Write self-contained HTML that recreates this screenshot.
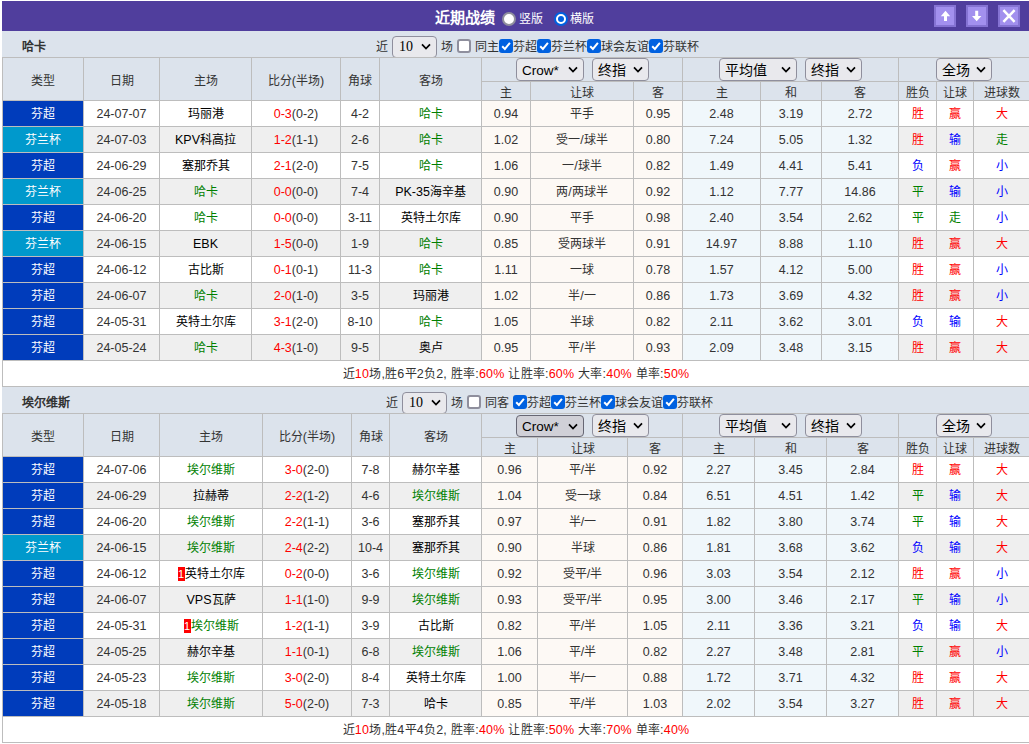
<!DOCTYPE html>
<html lang="zh-CN"><head><meta charset="utf-8"><title>近期战绩</title>
<style>
html,body{margin:0;padding:0;background:#fff;width:1029px;height:744px;overflow:hidden;position:relative}
body{font-family:"Liberation Sans",sans-serif;font-size:12px;color:#333}
.c,.t,.sel,.cb,.rad,.btn{position:absolute;box-sizing:border-box}
.c{overflow:hidden;text-align:center;line-height:25px;white-space:nowrap}
.d{padding-top:1px}
.sm{letter-spacing:0.22px}
.h{padding-top:2px}
.t{white-space:nowrap;height:26px;line-height:26px;padding-top:3px}
.n{font-size:12.5px}
.tm{color:#000}
.tg{color:#008000}
.r{color:#f00}
.rc{background:#f00;color:#fff;font-size:11px;display:inline-block;line-height:14px;width:7px;text-align:center;vertical-align:0px}
.top{position:absolute;left:2px;top:1px;width:1027px;height:30px;background:#503e9d}
.title{position:absolute;left:435px;top:3px;height:30px;line-height:30px;color:#fff;font-size:15px;font-weight:bold;white-space:nowrap}
.rt{position:absolute;top:4px;height:30px;line-height:30px;color:#fff;font-size:12px;white-space:nowrap}
.btn{top:5px;width:22px;height:22px;background:#a290ee;border:2px solid #8573d3}
.btn svg{position:absolute;left:-2px;top:-2px}
.bname{font-weight:bold;color:#333}
.bt{color:#333}
.sel{border:1px solid #8f8f9d;border-radius:4px;background:#e9e9ed;color:#000;font-size:14px;line-height:20px;white-space:nowrap;padding-left:5px;padding-top:1px}
.sel.dark{background:#d0d0d7;border-color:#676774;padding-top:0}
.sel .chev{position:absolute;right:5px;top:7px}
.sel .mono{font-family:"Liberation Serif",serif;font-size:14px;position:relative;top:-2px;left:1px}
.sel.s10 .chev{top:6px}
.sel .lat{font-size:13.5px}
.cb{width:14px;height:14px;border:2px solid #8f8f9d;border-radius:3px;background:#fff}
.cb.on{border:none;background:#0061e0}
.cb svg{position:absolute;left:0;top:0}
.rad{width:14px;height:14px;border-radius:50%;border:2px solid #8f8f9d;background:#fff}
.rad.on{border:2px solid #0061e0}
.rad.on i{position:absolute;left:2px;top:2px;width:6px;height:6px;border-radius:50%;background:#0061e0}
</style></head><body>
<div class="top"></div>
<div class="title">近期战绩</div>
<div class="rad" style="left:502px;top:12px"></div><div class="rt" style="left:519px">竖版</div>
<div class="rad on" style="left:554px;top:12px"><i></i></div><div class="rt" style="left:570px">横版</div>
<div class="btn" style="left:934px"><svg width="22" height="22" viewBox="0 0 22 22"><path d="M11.5 5.8 L16.2 11.2 L13 11.2 L13 16 L10 16 L10 11.2 L6.8 11.2 Z" fill="#fff"/></svg></div>
<div class="btn" style="left:966px"><svg width="22" height="22" viewBox="0 0 22 22"><path d="M9.2 5.8 L12.2 5.8 L12.2 10.9 L15.4 10.9 L10.7 16.3 L6 10.9 L9.2 10.9 Z" fill="#fff"/></svg></div>
<div class="btn" style="left:998px"><svg width="22" height="22" viewBox="0 0 22 22"><path d="M5.4 5.2 L16.6 16.8 M16.6 5.2 L5.4 16.8" stroke="#fff" stroke-width="2.5"/></svg></div>
<div class="c" style="left:2px;top:31px;width:1027px;height:26px;background:#dce3ec"></div><div class="t bname" style="left:22px;top:31px;">哈卡</div><div class="t bt" style="left:376px;top:31px;">近</div><div class="sel s10" style="left:392px;top:36px;width:45px;height:22px"><span class="mono">10</span><svg class="chev" width="10" height="7" viewBox="0 0 10 7"><path d="M1 1.3 L5 5.5 L9 1.3" fill="none" stroke="#000" stroke-width="1.7"/></svg></div><div class="t bt" style="left:441px;top:31px;">场</div><div class="cb" style="left:457px;top:39px"></div><div class="t bt" style="left:475px;top:31px;">同主</div><div class="cb on" style="left:499px;top:39px"><svg width="14" height="14" viewBox="0 0 14 14"><path d="M3.2 7.2 L5.9 9.9 L10.9 3.9" fill="none" stroke="#fff" stroke-width="2"/></svg></div><div class="t bt" style="left:513px;top:31px;">芬超</div><div class="cb on" style="left:537px;top:39px"><svg width="14" height="14" viewBox="0 0 14 14"><path d="M3.2 7.2 L5.9 9.9 L10.9 3.9" fill="none" stroke="#fff" stroke-width="2"/></svg></div><div class="t bt" style="left:551px;top:31px;">芬兰杯</div><div class="cb on" style="left:587px;top:39px"><svg width="14" height="14" viewBox="0 0 14 14"><path d="M3.2 7.2 L5.9 9.9 L10.9 3.9" fill="none" stroke="#fff" stroke-width="2"/></svg></div><div class="t bt" style="left:601px;top:31px;">球会友谊</div><div class="cb on" style="left:649px;top:39px"><svg width="14" height="14" viewBox="0 0 14 14"><path d="M3.2 7.2 L5.9 9.9 L10.9 3.9" fill="none" stroke="#fff" stroke-width="2"/></svg></div><div class="t bt" style="left:663px;top:31px;">芬联杯</div><div class="c" style="left:2px;top:57px;width:1040px;height:330px;background:#bdbdbd"></div><div class="c h" style="left:3px;top:58px;width:80px;height:42px;background:#dce3ec;line-height:42px">类型</div><div class="c h" style="left:84px;top:58px;width:75px;height:42px;background:#dce3ec;line-height:42px">日期</div><div class="c h" style="left:160px;top:58px;width:91px;height:42px;background:#dce3ec;line-height:42px">主场</div><div class="c h" style="left:252px;top:58px;width:88px;height:42px;background:#dce3ec;line-height:42px">比分<span class="n">(</span>半场<span class="n">)</span></div><div class="c h" style="left:341px;top:58px;width:38px;height:42px;background:#dce3ec;line-height:42px">角球</div><div class="c h" style="left:380px;top:58px;width:101px;height:42px;background:#dce3ec;line-height:42px">客场</div><div class="c h" style="left:482px;top:58px;width:200px;height:23px;background:#dce3ec"></div><div class="c h" style="left:683px;top:58px;width:215px;height:23px;background:#dce3ec"></div><div class="c h" style="left:899px;top:58px;width:130px;height:23px;background:#dce3ec"></div><div class="sel" style="left:516px;top:58px;width:68px;height:23px"><span class="lat">Crow*</span><svg class="chev" width="10" height="7" viewBox="0 0 10 7"><path d="M1 1.3 L5 5.5 L9 1.3" fill="none" stroke="#000" stroke-width="1.7"/></svg></div><div class="sel" style="left:592px;top:58px;width:57px;height:23px"><span class="">终指</span><svg class="chev" width="10" height="7" viewBox="0 0 10 7"><path d="M1 1.3 L5 5.5 L9 1.3" fill="none" stroke="#000" stroke-width="1.7"/></svg></div><div class="sel" style="left:719px;top:58px;width:78px;height:23px"><span class="">平均值</span><svg class="chev" width="10" height="7" viewBox="0 0 10 7"><path d="M1 1.3 L5 5.5 L9 1.3" fill="none" stroke="#000" stroke-width="1.7"/></svg></div><div class="sel" style="left:805px;top:58px;width:57px;height:23px"><span class="">终指</span><svg class="chev" width="10" height="7" viewBox="0 0 10 7"><path d="M1 1.3 L5 5.5 L9 1.3" fill="none" stroke="#000" stroke-width="1.7"/></svg></div><div class="sel" style="left:936px;top:58px;width:56px;height:23px"><span class="">全场</span><svg class="chev" width="10" height="7" viewBox="0 0 10 7"><path d="M1 1.3 L5 5.5 L9 1.3" fill="none" stroke="#000" stroke-width="1.7"/></svg></div><div class="c h" style="left:482px;top:82px;width:48px;height:18px;background:#dce3ec;line-height:18px">主</div><div class="c h" style="left:531px;top:82px;width:102px;height:18px;background:#dce3ec;line-height:18px">让球</div><div class="c h" style="left:634px;top:82px;width:48px;height:18px;background:#dce3ec;line-height:18px">客</div><div class="c h" style="left:683px;top:82px;width:77px;height:18px;background:#dce3ec;line-height:18px">主</div><div class="c h" style="left:761px;top:82px;width:60px;height:18px;background:#dce3ec;line-height:18px">和</div><div class="c h" style="left:822px;top:82px;width:76px;height:18px;background:#dce3ec;line-height:18px">客</div><div class="c h" style="left:899px;top:82px;width:37px;height:18px;background:#dce3ec;line-height:18px">胜负</div><div class="c h" style="left:937px;top:82px;width:36px;height:18px;background:#dce3ec;line-height:18px">让球</div><div class="c h" style="left:974px;top:82px;width:55px;height:18px;background:#dce3ec;line-height:18px">进球数</div><div class="c d" style="left:3px;top:101px;width:80px;height:25px;background:#003cbb;color:#fff">芬超</div><div class="c d" style="left:84px;top:101px;width:75px;height:25px;background:#fff"><span class="n">24-07-07</span></div><div class="c d" style="left:160px;top:101px;width:91px;height:25px;background:#fff"><span class="tm">玛丽港</span></div><div class="c d" style="left:252px;top:101px;width:88px;height:25px;background:#fff"><span class="r"><span class="n">0-3</span></span><span class="n">(0-2)</span></div><div class="c d" style="left:341px;top:101px;width:38px;height:25px;background:#fff"><span class="n">4-2</span></div><div class="c d" style="left:380px;top:101px;width:101px;height:25px;background:#fff"><span class="tg">哈卡</span></div><div class="c d" style="left:482px;top:101px;width:48px;height:25px;background:#fdf9f5"><span class="n">0.94</span></div><div class="c d" style="left:531px;top:101px;width:102px;height:25px;background:#fdf9f5">平手</div><div class="c d" style="left:634px;top:101px;width:48px;height:25px;background:#fdf9f5"><span class="n">0.95</span></div><div class="c d" style="left:683px;top:101px;width:77px;height:25px;background:#f0f7fb"><span class="n">2.48</span></div><div class="c d" style="left:761px;top:101px;width:60px;height:25px;background:#f0f7fb"><span class="n">3.19</span></div><div class="c d" style="left:822px;top:101px;width:76px;height:25px;background:#f0f7fb"><span class="n">2.72</span></div><div class="c d" style="left:899px;top:101px;width:37px;height:25px;background:#fff;color:#f00">胜</div><div class="c d" style="left:937px;top:101px;width:36px;height:25px;background:#fff;color:#f00">赢</div><div class="c d" style="left:974px;top:101px;width:55px;height:25px;background:#fff;color:#f00">大</div><div class="c d" style="left:3px;top:127px;width:80px;height:25px;background:#0099cc;color:#fff">芬兰杯</div><div class="c d" style="left:84px;top:127px;width:75px;height:25px;background:#efefef"><span class="n">24-07-03</span></div><div class="c d" style="left:160px;top:127px;width:91px;height:25px;background:#efefef"><span class="tm"><span class="n">KPV</span>科高拉</span></div><div class="c d" style="left:252px;top:127px;width:88px;height:25px;background:#efefef"><span class="r"><span class="n">1-2</span></span><span class="n">(1-1)</span></div><div class="c d" style="left:341px;top:127px;width:38px;height:25px;background:#efefef"><span class="n">2-6</span></div><div class="c d" style="left:380px;top:127px;width:101px;height:25px;background:#efefef"><span class="tg">哈卡</span></div><div class="c d" style="left:482px;top:127px;width:48px;height:25px;background:#fdf9f5"><span class="n">1.02</span></div><div class="c d" style="left:531px;top:127px;width:102px;height:25px;background:#fdf9f5">受一<span class="n">/</span>球半</div><div class="c d" style="left:634px;top:127px;width:48px;height:25px;background:#fdf9f5"><span class="n">0.80</span></div><div class="c d" style="left:683px;top:127px;width:77px;height:25px;background:#f0f7fb"><span class="n">7.24</span></div><div class="c d" style="left:761px;top:127px;width:60px;height:25px;background:#f0f7fb"><span class="n">5.05</span></div><div class="c d" style="left:822px;top:127px;width:76px;height:25px;background:#f0f7fb"><span class="n">1.32</span></div><div class="c d" style="left:899px;top:127px;width:37px;height:25px;background:#efefef;color:#f00">胜</div><div class="c d" style="left:937px;top:127px;width:36px;height:25px;background:#efefef;color:#00f">输</div><div class="c d" style="left:974px;top:127px;width:55px;height:25px;background:#efefef;color:#008000">走</div><div class="c d" style="left:3px;top:153px;width:80px;height:25px;background:#003cbb;color:#fff">芬超</div><div class="c d" style="left:84px;top:153px;width:75px;height:25px;background:#fff"><span class="n">24-06-29</span></div><div class="c d" style="left:160px;top:153px;width:91px;height:25px;background:#fff"><span class="tm">塞那乔其</span></div><div class="c d" style="left:252px;top:153px;width:88px;height:25px;background:#fff"><span class="r"><span class="n">2-1</span></span><span class="n">(2-0)</span></div><div class="c d" style="left:341px;top:153px;width:38px;height:25px;background:#fff"><span class="n">7-5</span></div><div class="c d" style="left:380px;top:153px;width:101px;height:25px;background:#fff"><span class="tg">哈卡</span></div><div class="c d" style="left:482px;top:153px;width:48px;height:25px;background:#fdf9f5"><span class="n">1.06</span></div><div class="c d" style="left:531px;top:153px;width:102px;height:25px;background:#fdf9f5">一<span class="n">/</span>球半</div><div class="c d" style="left:634px;top:153px;width:48px;height:25px;background:#fdf9f5"><span class="n">0.82</span></div><div class="c d" style="left:683px;top:153px;width:77px;height:25px;background:#f0f7fb"><span class="n">1.49</span></div><div class="c d" style="left:761px;top:153px;width:60px;height:25px;background:#f0f7fb"><span class="n">4.41</span></div><div class="c d" style="left:822px;top:153px;width:76px;height:25px;background:#f0f7fb"><span class="n">5.41</span></div><div class="c d" style="left:899px;top:153px;width:37px;height:25px;background:#fff;color:#00f">负</div><div class="c d" style="left:937px;top:153px;width:36px;height:25px;background:#fff;color:#f00">赢</div><div class="c d" style="left:974px;top:153px;width:55px;height:25px;background:#fff;color:#00f">小</div><div class="c d" style="left:3px;top:179px;width:80px;height:25px;background:#0099cc;color:#fff">芬兰杯</div><div class="c d" style="left:84px;top:179px;width:75px;height:25px;background:#efefef"><span class="n">24-06-25</span></div><div class="c d" style="left:160px;top:179px;width:91px;height:25px;background:#efefef"><span class="tg">哈卡</span></div><div class="c d" style="left:252px;top:179px;width:88px;height:25px;background:#efefef"><span class="r"><span class="n">0-0</span></span><span class="n">(0-0)</span></div><div class="c d" style="left:341px;top:179px;width:38px;height:25px;background:#efefef"><span class="n">7-4</span></div><div class="c d" style="left:380px;top:179px;width:101px;height:25px;background:#efefef"><span class="tm"><span class="n">PK-35</span>海辛基</span></div><div class="c d" style="left:482px;top:179px;width:48px;height:25px;background:#fdf9f5"><span class="n">0.90</span></div><div class="c d" style="left:531px;top:179px;width:102px;height:25px;background:#fdf9f5">两<span class="n">/</span>两球半</div><div class="c d" style="left:634px;top:179px;width:48px;height:25px;background:#fdf9f5"><span class="n">0.92</span></div><div class="c d" style="left:683px;top:179px;width:77px;height:25px;background:#f0f7fb"><span class="n">1.12</span></div><div class="c d" style="left:761px;top:179px;width:60px;height:25px;background:#f0f7fb"><span class="n">7.77</span></div><div class="c d" style="left:822px;top:179px;width:76px;height:25px;background:#f0f7fb"><span class="n">14.86</span></div><div class="c d" style="left:899px;top:179px;width:37px;height:25px;background:#efefef;color:#008000">平</div><div class="c d" style="left:937px;top:179px;width:36px;height:25px;background:#efefef;color:#00f">输</div><div class="c d" style="left:974px;top:179px;width:55px;height:25px;background:#efefef;color:#00f">小</div><div class="c d" style="left:3px;top:205px;width:80px;height:25px;background:#003cbb;color:#fff">芬超</div><div class="c d" style="left:84px;top:205px;width:75px;height:25px;background:#fff"><span class="n">24-06-20</span></div><div class="c d" style="left:160px;top:205px;width:91px;height:25px;background:#fff"><span class="tg">哈卡</span></div><div class="c d" style="left:252px;top:205px;width:88px;height:25px;background:#fff"><span class="r"><span class="n">0-0</span></span><span class="n">(0-0)</span></div><div class="c d" style="left:341px;top:205px;width:38px;height:25px;background:#fff"><span class="n">3-11</span></div><div class="c d" style="left:380px;top:205px;width:101px;height:25px;background:#fff"><span class="tm">英特土尔库</span></div><div class="c d" style="left:482px;top:205px;width:48px;height:25px;background:#fdf9f5"><span class="n">0.90</span></div><div class="c d" style="left:531px;top:205px;width:102px;height:25px;background:#fdf9f5">平手</div><div class="c d" style="left:634px;top:205px;width:48px;height:25px;background:#fdf9f5"><span class="n">0.98</span></div><div class="c d" style="left:683px;top:205px;width:77px;height:25px;background:#f0f7fb"><span class="n">2.40</span></div><div class="c d" style="left:761px;top:205px;width:60px;height:25px;background:#f0f7fb"><span class="n">3.54</span></div><div class="c d" style="left:822px;top:205px;width:76px;height:25px;background:#f0f7fb"><span class="n">2.62</span></div><div class="c d" style="left:899px;top:205px;width:37px;height:25px;background:#fff;color:#008000">平</div><div class="c d" style="left:937px;top:205px;width:36px;height:25px;background:#fff;color:#008000">走</div><div class="c d" style="left:974px;top:205px;width:55px;height:25px;background:#fff;color:#00f">小</div><div class="c d" style="left:3px;top:231px;width:80px;height:25px;background:#0099cc;color:#fff">芬兰杯</div><div class="c d" style="left:84px;top:231px;width:75px;height:25px;background:#efefef"><span class="n">24-06-15</span></div><div class="c d" style="left:160px;top:231px;width:91px;height:25px;background:#efefef"><span class="tm"><span class="n">EBK</span></span></div><div class="c d" style="left:252px;top:231px;width:88px;height:25px;background:#efefef"><span class="r"><span class="n">1-5</span></span><span class="n">(0-0)</span></div><div class="c d" style="left:341px;top:231px;width:38px;height:25px;background:#efefef"><span class="n">1-9</span></div><div class="c d" style="left:380px;top:231px;width:101px;height:25px;background:#efefef"><span class="tg">哈卡</span></div><div class="c d" style="left:482px;top:231px;width:48px;height:25px;background:#fdf9f5"><span class="n">0.85</span></div><div class="c d" style="left:531px;top:231px;width:102px;height:25px;background:#fdf9f5">受两球半</div><div class="c d" style="left:634px;top:231px;width:48px;height:25px;background:#fdf9f5"><span class="n">0.91</span></div><div class="c d" style="left:683px;top:231px;width:77px;height:25px;background:#f0f7fb"><span class="n">14.97</span></div><div class="c d" style="left:761px;top:231px;width:60px;height:25px;background:#f0f7fb"><span class="n">8.88</span></div><div class="c d" style="left:822px;top:231px;width:76px;height:25px;background:#f0f7fb"><span class="n">1.10</span></div><div class="c d" style="left:899px;top:231px;width:37px;height:25px;background:#efefef;color:#f00">胜</div><div class="c d" style="left:937px;top:231px;width:36px;height:25px;background:#efefef;color:#f00">赢</div><div class="c d" style="left:974px;top:231px;width:55px;height:25px;background:#efefef;color:#f00">大</div><div class="c d" style="left:3px;top:257px;width:80px;height:25px;background:#003cbb;color:#fff">芬超</div><div class="c d" style="left:84px;top:257px;width:75px;height:25px;background:#fff"><span class="n">24-06-12</span></div><div class="c d" style="left:160px;top:257px;width:91px;height:25px;background:#fff"><span class="tm">古比斯</span></div><div class="c d" style="left:252px;top:257px;width:88px;height:25px;background:#fff"><span class="r"><span class="n">0-1</span></span><span class="n">(0-1)</span></div><div class="c d" style="left:341px;top:257px;width:38px;height:25px;background:#fff"><span class="n">11-3</span></div><div class="c d" style="left:380px;top:257px;width:101px;height:25px;background:#fff"><span class="tg">哈卡</span></div><div class="c d" style="left:482px;top:257px;width:48px;height:25px;background:#fdf9f5"><span class="n">1.11</span></div><div class="c d" style="left:531px;top:257px;width:102px;height:25px;background:#fdf9f5">一球</div><div class="c d" style="left:634px;top:257px;width:48px;height:25px;background:#fdf9f5"><span class="n">0.78</span></div><div class="c d" style="left:683px;top:257px;width:77px;height:25px;background:#f0f7fb"><span class="n">1.57</span></div><div class="c d" style="left:761px;top:257px;width:60px;height:25px;background:#f0f7fb"><span class="n">4.12</span></div><div class="c d" style="left:822px;top:257px;width:76px;height:25px;background:#f0f7fb"><span class="n">5.00</span></div><div class="c d" style="left:899px;top:257px;width:37px;height:25px;background:#fff;color:#f00">胜</div><div class="c d" style="left:937px;top:257px;width:36px;height:25px;background:#fff;color:#f00">赢</div><div class="c d" style="left:974px;top:257px;width:55px;height:25px;background:#fff;color:#00f">小</div><div class="c d" style="left:3px;top:283px;width:80px;height:25px;background:#003cbb;color:#fff">芬超</div><div class="c d" style="left:84px;top:283px;width:75px;height:25px;background:#efefef"><span class="n">24-06-07</span></div><div class="c d" style="left:160px;top:283px;width:91px;height:25px;background:#efefef"><span class="tg">哈卡</span></div><div class="c d" style="left:252px;top:283px;width:88px;height:25px;background:#efefef"><span class="r"><span class="n">2-0</span></span><span class="n">(1-0)</span></div><div class="c d" style="left:341px;top:283px;width:38px;height:25px;background:#efefef"><span class="n">3-5</span></div><div class="c d" style="left:380px;top:283px;width:101px;height:25px;background:#efefef"><span class="tm">玛丽港</span></div><div class="c d" style="left:482px;top:283px;width:48px;height:25px;background:#fdf9f5"><span class="n">1.02</span></div><div class="c d" style="left:531px;top:283px;width:102px;height:25px;background:#fdf9f5">半<span class="n">/</span>一</div><div class="c d" style="left:634px;top:283px;width:48px;height:25px;background:#fdf9f5"><span class="n">0.86</span></div><div class="c d" style="left:683px;top:283px;width:77px;height:25px;background:#f0f7fb"><span class="n">1.73</span></div><div class="c d" style="left:761px;top:283px;width:60px;height:25px;background:#f0f7fb"><span class="n">3.69</span></div><div class="c d" style="left:822px;top:283px;width:76px;height:25px;background:#f0f7fb"><span class="n">4.32</span></div><div class="c d" style="left:899px;top:283px;width:37px;height:25px;background:#efefef;color:#f00">胜</div><div class="c d" style="left:937px;top:283px;width:36px;height:25px;background:#efefef;color:#f00">赢</div><div class="c d" style="left:974px;top:283px;width:55px;height:25px;background:#efefef;color:#00f">小</div><div class="c d" style="left:3px;top:309px;width:80px;height:25px;background:#003cbb;color:#fff">芬超</div><div class="c d" style="left:84px;top:309px;width:75px;height:25px;background:#fff"><span class="n">24-05-31</span></div><div class="c d" style="left:160px;top:309px;width:91px;height:25px;background:#fff"><span class="tm">英特土尔库</span></div><div class="c d" style="left:252px;top:309px;width:88px;height:25px;background:#fff"><span class="r"><span class="n">3-1</span></span><span class="n">(2-0)</span></div><div class="c d" style="left:341px;top:309px;width:38px;height:25px;background:#fff"><span class="n">8-10</span></div><div class="c d" style="left:380px;top:309px;width:101px;height:25px;background:#fff"><span class="tg">哈卡</span></div><div class="c d" style="left:482px;top:309px;width:48px;height:25px;background:#fdf9f5"><span class="n">1.05</span></div><div class="c d" style="left:531px;top:309px;width:102px;height:25px;background:#fdf9f5">半球</div><div class="c d" style="left:634px;top:309px;width:48px;height:25px;background:#fdf9f5"><span class="n">0.82</span></div><div class="c d" style="left:683px;top:309px;width:77px;height:25px;background:#f0f7fb"><span class="n">2.11</span></div><div class="c d" style="left:761px;top:309px;width:60px;height:25px;background:#f0f7fb"><span class="n">3.62</span></div><div class="c d" style="left:822px;top:309px;width:76px;height:25px;background:#f0f7fb"><span class="n">3.01</span></div><div class="c d" style="left:899px;top:309px;width:37px;height:25px;background:#fff;color:#00f">负</div><div class="c d" style="left:937px;top:309px;width:36px;height:25px;background:#fff;color:#00f">输</div><div class="c d" style="left:974px;top:309px;width:55px;height:25px;background:#fff;color:#f00">大</div><div class="c d" style="left:3px;top:335px;width:80px;height:25px;background:#003cbb;color:#fff">芬超</div><div class="c d" style="left:84px;top:335px;width:75px;height:25px;background:#efefef"><span class="n">24-05-24</span></div><div class="c d" style="left:160px;top:335px;width:91px;height:25px;background:#efefef"><span class="tg">哈卡</span></div><div class="c d" style="left:252px;top:335px;width:88px;height:25px;background:#efefef"><span class="r"><span class="n">4-3</span></span><span class="n">(1-0)</span></div><div class="c d" style="left:341px;top:335px;width:38px;height:25px;background:#efefef"><span class="n">9-5</span></div><div class="c d" style="left:380px;top:335px;width:101px;height:25px;background:#efefef"><span class="tm">奥卢</span></div><div class="c d" style="left:482px;top:335px;width:48px;height:25px;background:#fdf9f5"><span class="n">0.95</span></div><div class="c d" style="left:531px;top:335px;width:102px;height:25px;background:#fdf9f5">平<span class="n">/</span>半</div><div class="c d" style="left:634px;top:335px;width:48px;height:25px;background:#fdf9f5"><span class="n">0.93</span></div><div class="c d" style="left:683px;top:335px;width:77px;height:25px;background:#f0f7fb"><span class="n">2.09</span></div><div class="c d" style="left:761px;top:335px;width:60px;height:25px;background:#f0f7fb"><span class="n">3.48</span></div><div class="c d" style="left:822px;top:335px;width:76px;height:25px;background:#f0f7fb"><span class="n">3.15</span></div><div class="c d" style="left:899px;top:335px;width:37px;height:25px;background:#efefef;color:#f00">胜</div><div class="c d" style="left:937px;top:335px;width:36px;height:25px;background:#efefef;color:#f00">赢</div><div class="c d" style="left:974px;top:335px;width:55px;height:25px;background:#efefef;color:#f00">大</div><div class="c d sm" style="left:3px;top:361px;width:1040px;height:25px;background:#fff;padding-right:14px">近<span class="r"><span class="n">10</span></span>场<span class="n">,</span>胜<span class="n">6</span>平<span class="n">2</span>负<span class="n">2, </span>胜率<span class="n">:</span><span class="r"><span class="n">60%</span></span><span class="n"> </span>让胜率<span class="n">:</span><span class="r"><span class="n">60%</span></span><span class="n"> </span>大率<span class="n">:</span><span class="r"><span class="n">40%</span></span><span class="n"> </span>单率<span class="n">:</span><span class="r"><span class="n">50%</span></span></div><div class="c" style="left:2px;top:387px;width:1027px;height:26px;background:#dce3ec"></div><div class="t bname" style="left:22px;top:387px;">埃尔维斯</div><div class="t bt" style="left:386px;top:387px;">近</div><div class="sel s10" style="left:402px;top:392px;width:45px;height:22px"><span class="mono">10</span><svg class="chev" width="10" height="7" viewBox="0 0 10 7"><path d="M1 1.3 L5 5.5 L9 1.3" fill="none" stroke="#000" stroke-width="1.7"/></svg></div><div class="t bt" style="left:451px;top:387px;">场</div><div class="cb" style="left:467px;top:395px"></div><div class="t bt" style="left:485px;top:387px;">同客</div><div class="cb on" style="left:513px;top:395px"><svg width="14" height="14" viewBox="0 0 14 14"><path d="M3.2 7.2 L5.9 9.9 L10.9 3.9" fill="none" stroke="#fff" stroke-width="2"/></svg></div><div class="t bt" style="left:527px;top:387px;">芬超</div><div class="cb on" style="left:551px;top:395px"><svg width="14" height="14" viewBox="0 0 14 14"><path d="M3.2 7.2 L5.9 9.9 L10.9 3.9" fill="none" stroke="#fff" stroke-width="2"/></svg></div><div class="t bt" style="left:565px;top:387px;">芬兰杯</div><div class="cb on" style="left:601px;top:395px"><svg width="14" height="14" viewBox="0 0 14 14"><path d="M3.2 7.2 L5.9 9.9 L10.9 3.9" fill="none" stroke="#fff" stroke-width="2"/></svg></div><div class="t bt" style="left:615px;top:387px;">球会友谊</div><div class="cb on" style="left:663px;top:395px"><svg width="14" height="14" viewBox="0 0 14 14"><path d="M3.2 7.2 L5.9 9.9 L10.9 3.9" fill="none" stroke="#fff" stroke-width="2"/></svg></div><div class="t bt" style="left:677px;top:387px;">芬联杯</div><div class="c" style="left:2px;top:413px;width:1040px;height:330px;background:#bdbdbd"></div><div class="c h" style="left:3px;top:414px;width:80px;height:42px;background:#dce3ec;line-height:42px">类型</div><div class="c h" style="left:84px;top:414px;width:75px;height:42px;background:#dce3ec;line-height:42px">日期</div><div class="c h" style="left:160px;top:414px;width:102px;height:42px;background:#dce3ec;line-height:42px">主场</div><div class="c h" style="left:263px;top:414px;width:88px;height:42px;background:#dce3ec;line-height:42px">比分<span class="n">(</span>半场<span class="n">)</span></div><div class="c h" style="left:352px;top:414px;width:37px;height:42px;background:#dce3ec;line-height:42px">角球</div><div class="c h" style="left:390px;top:414px;width:91px;height:42px;background:#dce3ec;line-height:42px">客场</div><div class="c h" style="left:482px;top:414px;width:200px;height:23px;background:#dce3ec"></div><div class="c h" style="left:683px;top:414px;width:215px;height:23px;background:#dce3ec"></div><div class="c h" style="left:899px;top:414px;width:130px;height:23px;background:#dce3ec"></div><div class="sel dark" style="left:516px;top:415px;width:68px;height:22px"><span class="lat">Crow*</span><svg class="chev" width="10" height="7" viewBox="0 0 10 7"><path d="M1 1.3 L5 5.5 L9 1.3" fill="none" stroke="#000" stroke-width="1.7"/></svg></div><div class="sel" style="left:592px;top:414px;width:57px;height:23px"><span class="">终指</span><svg class="chev" width="10" height="7" viewBox="0 0 10 7"><path d="M1 1.3 L5 5.5 L9 1.3" fill="none" stroke="#000" stroke-width="1.7"/></svg></div><div class="sel" style="left:719px;top:414px;width:78px;height:23px"><span class="">平均值</span><svg class="chev" width="10" height="7" viewBox="0 0 10 7"><path d="M1 1.3 L5 5.5 L9 1.3" fill="none" stroke="#000" stroke-width="1.7"/></svg></div><div class="sel" style="left:805px;top:414px;width:57px;height:23px"><span class="">终指</span><svg class="chev" width="10" height="7" viewBox="0 0 10 7"><path d="M1 1.3 L5 5.5 L9 1.3" fill="none" stroke="#000" stroke-width="1.7"/></svg></div><div class="sel" style="left:936px;top:414px;width:56px;height:23px"><span class="">全场</span><svg class="chev" width="10" height="7" viewBox="0 0 10 7"><path d="M1 1.3 L5 5.5 L9 1.3" fill="none" stroke="#000" stroke-width="1.7"/></svg></div><div class="c h" style="left:482px;top:438px;width:55px;height:18px;background:#dce3ec;line-height:18px">主</div><div class="c h" style="left:538px;top:438px;width:89px;height:18px;background:#dce3ec;line-height:18px">让球</div><div class="c h" style="left:628px;top:438px;width:54px;height:18px;background:#dce3ec;line-height:18px">客</div><div class="c h" style="left:683px;top:438px;width:71px;height:18px;background:#dce3ec;line-height:18px">主</div><div class="c h" style="left:755px;top:438px;width:71px;height:18px;background:#dce3ec;line-height:18px">和</div><div class="c h" style="left:827px;top:438px;width:71px;height:18px;background:#dce3ec;line-height:18px">客</div><div class="c h" style="left:899px;top:438px;width:37px;height:18px;background:#dce3ec;line-height:18px">胜负</div><div class="c h" style="left:937px;top:438px;width:36px;height:18px;background:#dce3ec;line-height:18px">让球</div><div class="c h" style="left:974px;top:438px;width:55px;height:18px;background:#dce3ec;line-height:18px">进球数</div><div class="c d" style="left:3px;top:457px;width:80px;height:25px;background:#003cbb;color:#fff">芬超</div><div class="c d" style="left:84px;top:457px;width:75px;height:25px;background:#fff"><span class="n">24-07-06</span></div><div class="c d" style="left:160px;top:457px;width:102px;height:25px;background:#fff"><span class="tg">埃尔维斯</span></div><div class="c d" style="left:263px;top:457px;width:88px;height:25px;background:#fff"><span class="r"><span class="n">3-0</span></span><span class="n">(2-0)</span></div><div class="c d" style="left:352px;top:457px;width:37px;height:25px;background:#fff"><span class="n">7-8</span></div><div class="c d" style="left:390px;top:457px;width:91px;height:25px;background:#fff"><span class="tm">赫尔辛基</span></div><div class="c d" style="left:482px;top:457px;width:55px;height:25px;background:#fdf9f5"><span class="n">0.96</span></div><div class="c d" style="left:538px;top:457px;width:89px;height:25px;background:#fdf9f5">平<span class="n">/</span>半</div><div class="c d" style="left:628px;top:457px;width:54px;height:25px;background:#fdf9f5"><span class="n">0.92</span></div><div class="c d" style="left:683px;top:457px;width:71px;height:25px;background:#f0f7fb"><span class="n">2.27</span></div><div class="c d" style="left:755px;top:457px;width:71px;height:25px;background:#f0f7fb"><span class="n">3.45</span></div><div class="c d" style="left:827px;top:457px;width:71px;height:25px;background:#f0f7fb"><span class="n">2.84</span></div><div class="c d" style="left:899px;top:457px;width:37px;height:25px;background:#fff;color:#f00">胜</div><div class="c d" style="left:937px;top:457px;width:36px;height:25px;background:#fff;color:#f00">赢</div><div class="c d" style="left:974px;top:457px;width:55px;height:25px;background:#fff;color:#f00">大</div><div class="c d" style="left:3px;top:483px;width:80px;height:25px;background:#003cbb;color:#fff">芬超</div><div class="c d" style="left:84px;top:483px;width:75px;height:25px;background:#efefef"><span class="n">24-06-29</span></div><div class="c d" style="left:160px;top:483px;width:102px;height:25px;background:#efefef"><span class="tm">拉赫蒂</span></div><div class="c d" style="left:263px;top:483px;width:88px;height:25px;background:#efefef"><span class="r"><span class="n">2-2</span></span><span class="n">(1-2)</span></div><div class="c d" style="left:352px;top:483px;width:37px;height:25px;background:#efefef"><span class="n">4-6</span></div><div class="c d" style="left:390px;top:483px;width:91px;height:25px;background:#efefef"><span class="tg">埃尔维斯</span></div><div class="c d" style="left:482px;top:483px;width:55px;height:25px;background:#fdf9f5"><span class="n">1.04</span></div><div class="c d" style="left:538px;top:483px;width:89px;height:25px;background:#fdf9f5">受一球</div><div class="c d" style="left:628px;top:483px;width:54px;height:25px;background:#fdf9f5"><span class="n">0.84</span></div><div class="c d" style="left:683px;top:483px;width:71px;height:25px;background:#f0f7fb"><span class="n">6.51</span></div><div class="c d" style="left:755px;top:483px;width:71px;height:25px;background:#f0f7fb"><span class="n">4.51</span></div><div class="c d" style="left:827px;top:483px;width:71px;height:25px;background:#f0f7fb"><span class="n">1.42</span></div><div class="c d" style="left:899px;top:483px;width:37px;height:25px;background:#efefef;color:#008000">平</div><div class="c d" style="left:937px;top:483px;width:36px;height:25px;background:#efefef;color:#00f">输</div><div class="c d" style="left:974px;top:483px;width:55px;height:25px;background:#efefef;color:#f00">大</div><div class="c d" style="left:3px;top:509px;width:80px;height:25px;background:#003cbb;color:#fff">芬超</div><div class="c d" style="left:84px;top:509px;width:75px;height:25px;background:#fff"><span class="n">24-06-20</span></div><div class="c d" style="left:160px;top:509px;width:102px;height:25px;background:#fff"><span class="tg">埃尔维斯</span></div><div class="c d" style="left:263px;top:509px;width:88px;height:25px;background:#fff"><span class="r"><span class="n">2-2</span></span><span class="n">(1-1)</span></div><div class="c d" style="left:352px;top:509px;width:37px;height:25px;background:#fff"><span class="n">3-6</span></div><div class="c d" style="left:390px;top:509px;width:91px;height:25px;background:#fff"><span class="tm">塞那乔其</span></div><div class="c d" style="left:482px;top:509px;width:55px;height:25px;background:#fdf9f5"><span class="n">0.97</span></div><div class="c d" style="left:538px;top:509px;width:89px;height:25px;background:#fdf9f5">半<span class="n">/</span>一</div><div class="c d" style="left:628px;top:509px;width:54px;height:25px;background:#fdf9f5"><span class="n">0.91</span></div><div class="c d" style="left:683px;top:509px;width:71px;height:25px;background:#f0f7fb"><span class="n">1.82</span></div><div class="c d" style="left:755px;top:509px;width:71px;height:25px;background:#f0f7fb"><span class="n">3.80</span></div><div class="c d" style="left:827px;top:509px;width:71px;height:25px;background:#f0f7fb"><span class="n">3.74</span></div><div class="c d" style="left:899px;top:509px;width:37px;height:25px;background:#fff;color:#008000">平</div><div class="c d" style="left:937px;top:509px;width:36px;height:25px;background:#fff;color:#00f">输</div><div class="c d" style="left:974px;top:509px;width:55px;height:25px;background:#fff;color:#f00">大</div><div class="c d" style="left:3px;top:535px;width:80px;height:25px;background:#0099cc;color:#fff">芬兰杯</div><div class="c d" style="left:84px;top:535px;width:75px;height:25px;background:#efefef"><span class="n">24-06-15</span></div><div class="c d" style="left:160px;top:535px;width:102px;height:25px;background:#efefef"><span class="tg">埃尔维斯</span></div><div class="c d" style="left:263px;top:535px;width:88px;height:25px;background:#efefef"><span class="r"><span class="n">2-4</span></span><span class="n">(2-2)</span></div><div class="c d" style="left:352px;top:535px;width:37px;height:25px;background:#efefef"><span class="n">10-4</span></div><div class="c d" style="left:390px;top:535px;width:91px;height:25px;background:#efefef"><span class="tm">塞那乔其</span></div><div class="c d" style="left:482px;top:535px;width:55px;height:25px;background:#fdf9f5"><span class="n">0.90</span></div><div class="c d" style="left:538px;top:535px;width:89px;height:25px;background:#fdf9f5">半球</div><div class="c d" style="left:628px;top:535px;width:54px;height:25px;background:#fdf9f5"><span class="n">0.86</span></div><div class="c d" style="left:683px;top:535px;width:71px;height:25px;background:#f0f7fb"><span class="n">1.81</span></div><div class="c d" style="left:755px;top:535px;width:71px;height:25px;background:#f0f7fb"><span class="n">3.68</span></div><div class="c d" style="left:827px;top:535px;width:71px;height:25px;background:#f0f7fb"><span class="n">3.62</span></div><div class="c d" style="left:899px;top:535px;width:37px;height:25px;background:#efefef;color:#00f">负</div><div class="c d" style="left:937px;top:535px;width:36px;height:25px;background:#efefef;color:#00f">输</div><div class="c d" style="left:974px;top:535px;width:55px;height:25px;background:#efefef;color:#f00">大</div><div class="c d" style="left:3px;top:561px;width:80px;height:25px;background:#003cbb;color:#fff">芬超</div><div class="c d" style="left:84px;top:561px;width:75px;height:25px;background:#fff"><span class="n">24-06-12</span></div><div class="c d" style="left:160px;top:561px;width:102px;height:25px;background:#fff"><span class="rc">1</span><span class="tm">英特土尔库</span></div><div class="c d" style="left:263px;top:561px;width:88px;height:25px;background:#fff"><span class="r"><span class="n">0-2</span></span><span class="n">(0-0)</span></div><div class="c d" style="left:352px;top:561px;width:37px;height:25px;background:#fff"><span class="n">3-6</span></div><div class="c d" style="left:390px;top:561px;width:91px;height:25px;background:#fff"><span class="tg">埃尔维斯</span></div><div class="c d" style="left:482px;top:561px;width:55px;height:25px;background:#fdf9f5"><span class="n">0.92</span></div><div class="c d" style="left:538px;top:561px;width:89px;height:25px;background:#fdf9f5">受平<span class="n">/</span>半</div><div class="c d" style="left:628px;top:561px;width:54px;height:25px;background:#fdf9f5"><span class="n">0.96</span></div><div class="c d" style="left:683px;top:561px;width:71px;height:25px;background:#f0f7fb"><span class="n">3.03</span></div><div class="c d" style="left:755px;top:561px;width:71px;height:25px;background:#f0f7fb"><span class="n">3.54</span></div><div class="c d" style="left:827px;top:561px;width:71px;height:25px;background:#f0f7fb"><span class="n">2.12</span></div><div class="c d" style="left:899px;top:561px;width:37px;height:25px;background:#fff;color:#f00">胜</div><div class="c d" style="left:937px;top:561px;width:36px;height:25px;background:#fff;color:#f00">赢</div><div class="c d" style="left:974px;top:561px;width:55px;height:25px;background:#fff;color:#00f">小</div><div class="c d" style="left:3px;top:587px;width:80px;height:25px;background:#003cbb;color:#fff">芬超</div><div class="c d" style="left:84px;top:587px;width:75px;height:25px;background:#efefef"><span class="n">24-06-07</span></div><div class="c d" style="left:160px;top:587px;width:102px;height:25px;background:#efefef"><span class="tm"><span class="n">VPS</span>瓦萨</span></div><div class="c d" style="left:263px;top:587px;width:88px;height:25px;background:#efefef"><span class="r"><span class="n">1-1</span></span><span class="n">(1-0)</span></div><div class="c d" style="left:352px;top:587px;width:37px;height:25px;background:#efefef"><span class="n">9-9</span></div><div class="c d" style="left:390px;top:587px;width:91px;height:25px;background:#efefef"><span class="tg">埃尔维斯</span></div><div class="c d" style="left:482px;top:587px;width:55px;height:25px;background:#fdf9f5"><span class="n">0.93</span></div><div class="c d" style="left:538px;top:587px;width:89px;height:25px;background:#fdf9f5">受平<span class="n">/</span>半</div><div class="c d" style="left:628px;top:587px;width:54px;height:25px;background:#fdf9f5"><span class="n">0.95</span></div><div class="c d" style="left:683px;top:587px;width:71px;height:25px;background:#f0f7fb"><span class="n">3.00</span></div><div class="c d" style="left:755px;top:587px;width:71px;height:25px;background:#f0f7fb"><span class="n">3.46</span></div><div class="c d" style="left:827px;top:587px;width:71px;height:25px;background:#f0f7fb"><span class="n">2.17</span></div><div class="c d" style="left:899px;top:587px;width:37px;height:25px;background:#efefef;color:#008000">平</div><div class="c d" style="left:937px;top:587px;width:36px;height:25px;background:#efefef;color:#00f">输</div><div class="c d" style="left:974px;top:587px;width:55px;height:25px;background:#efefef;color:#00f">小</div><div class="c d" style="left:3px;top:613px;width:80px;height:25px;background:#003cbb;color:#fff">芬超</div><div class="c d" style="left:84px;top:613px;width:75px;height:25px;background:#fff"><span class="n">24-05-31</span></div><div class="c d" style="left:160px;top:613px;width:102px;height:25px;background:#fff"><span class="rc">1</span><span class="tg">埃尔维斯</span></div><div class="c d" style="left:263px;top:613px;width:88px;height:25px;background:#fff"><span class="r"><span class="n">1-2</span></span><span class="n">(1-1)</span></div><div class="c d" style="left:352px;top:613px;width:37px;height:25px;background:#fff"><span class="n">3-9</span></div><div class="c d" style="left:390px;top:613px;width:91px;height:25px;background:#fff"><span class="tm">古比斯</span></div><div class="c d" style="left:482px;top:613px;width:55px;height:25px;background:#fdf9f5"><span class="n">0.82</span></div><div class="c d" style="left:538px;top:613px;width:89px;height:25px;background:#fdf9f5">平<span class="n">/</span>半</div><div class="c d" style="left:628px;top:613px;width:54px;height:25px;background:#fdf9f5"><span class="n">1.05</span></div><div class="c d" style="left:683px;top:613px;width:71px;height:25px;background:#f0f7fb"><span class="n">2.11</span></div><div class="c d" style="left:755px;top:613px;width:71px;height:25px;background:#f0f7fb"><span class="n">3.36</span></div><div class="c d" style="left:827px;top:613px;width:71px;height:25px;background:#f0f7fb"><span class="n">3.21</span></div><div class="c d" style="left:899px;top:613px;width:37px;height:25px;background:#fff;color:#00f">负</div><div class="c d" style="left:937px;top:613px;width:36px;height:25px;background:#fff;color:#00f">输</div><div class="c d" style="left:974px;top:613px;width:55px;height:25px;background:#fff;color:#f00">大</div><div class="c d" style="left:3px;top:639px;width:80px;height:25px;background:#003cbb;color:#fff">芬超</div><div class="c d" style="left:84px;top:639px;width:75px;height:25px;background:#efefef"><span class="n">24-05-25</span></div><div class="c d" style="left:160px;top:639px;width:102px;height:25px;background:#efefef"><span class="tm">赫尔辛基</span></div><div class="c d" style="left:263px;top:639px;width:88px;height:25px;background:#efefef"><span class="r"><span class="n">1-1</span></span><span class="n">(0-1)</span></div><div class="c d" style="left:352px;top:639px;width:37px;height:25px;background:#efefef"><span class="n">6-8</span></div><div class="c d" style="left:390px;top:639px;width:91px;height:25px;background:#efefef"><span class="tg">埃尔维斯</span></div><div class="c d" style="left:482px;top:639px;width:55px;height:25px;background:#fdf9f5"><span class="n">1.06</span></div><div class="c d" style="left:538px;top:639px;width:89px;height:25px;background:#fdf9f5">平<span class="n">/</span>半</div><div class="c d" style="left:628px;top:639px;width:54px;height:25px;background:#fdf9f5"><span class="n">0.82</span></div><div class="c d" style="left:683px;top:639px;width:71px;height:25px;background:#f0f7fb"><span class="n">2.27</span></div><div class="c d" style="left:755px;top:639px;width:71px;height:25px;background:#f0f7fb"><span class="n">3.48</span></div><div class="c d" style="left:827px;top:639px;width:71px;height:25px;background:#f0f7fb"><span class="n">2.81</span></div><div class="c d" style="left:899px;top:639px;width:37px;height:25px;background:#efefef;color:#008000">平</div><div class="c d" style="left:937px;top:639px;width:36px;height:25px;background:#efefef;color:#f00">赢</div><div class="c d" style="left:974px;top:639px;width:55px;height:25px;background:#efefef;color:#00f">小</div><div class="c d" style="left:3px;top:665px;width:80px;height:25px;background:#003cbb;color:#fff">芬超</div><div class="c d" style="left:84px;top:665px;width:75px;height:25px;background:#fff"><span class="n">24-05-23</span></div><div class="c d" style="left:160px;top:665px;width:102px;height:25px;background:#fff"><span class="tg">埃尔维斯</span></div><div class="c d" style="left:263px;top:665px;width:88px;height:25px;background:#fff"><span class="r"><span class="n">3-0</span></span><span class="n">(2-0)</span></div><div class="c d" style="left:352px;top:665px;width:37px;height:25px;background:#fff"><span class="n">8-4</span></div><div class="c d" style="left:390px;top:665px;width:91px;height:25px;background:#fff"><span class="tm">英特土尔库</span></div><div class="c d" style="left:482px;top:665px;width:55px;height:25px;background:#fdf9f5"><span class="n">1.00</span></div><div class="c d" style="left:538px;top:665px;width:89px;height:25px;background:#fdf9f5">半<span class="n">/</span>一</div><div class="c d" style="left:628px;top:665px;width:54px;height:25px;background:#fdf9f5"><span class="n">0.88</span></div><div class="c d" style="left:683px;top:665px;width:71px;height:25px;background:#f0f7fb"><span class="n">1.72</span></div><div class="c d" style="left:755px;top:665px;width:71px;height:25px;background:#f0f7fb"><span class="n">3.71</span></div><div class="c d" style="left:827px;top:665px;width:71px;height:25px;background:#f0f7fb"><span class="n">4.32</span></div><div class="c d" style="left:899px;top:665px;width:37px;height:25px;background:#fff;color:#f00">胜</div><div class="c d" style="left:937px;top:665px;width:36px;height:25px;background:#fff;color:#f00">赢</div><div class="c d" style="left:974px;top:665px;width:55px;height:25px;background:#fff;color:#f00">大</div><div class="c d" style="left:3px;top:691px;width:80px;height:25px;background:#003cbb;color:#fff">芬超</div><div class="c d" style="left:84px;top:691px;width:75px;height:25px;background:#efefef"><span class="n">24-05-18</span></div><div class="c d" style="left:160px;top:691px;width:102px;height:25px;background:#efefef"><span class="tg">埃尔维斯</span></div><div class="c d" style="left:263px;top:691px;width:88px;height:25px;background:#efefef"><span class="r"><span class="n">5-0</span></span><span class="n">(2-0)</span></div><div class="c d" style="left:352px;top:691px;width:37px;height:25px;background:#efefef"><span class="n">7-3</span></div><div class="c d" style="left:390px;top:691px;width:91px;height:25px;background:#efefef"><span class="tm">哈卡</span></div><div class="c d" style="left:482px;top:691px;width:55px;height:25px;background:#fdf9f5"><span class="n">0.85</span></div><div class="c d" style="left:538px;top:691px;width:89px;height:25px;background:#fdf9f5">平<span class="n">/</span>半</div><div class="c d" style="left:628px;top:691px;width:54px;height:25px;background:#fdf9f5"><span class="n">1.03</span></div><div class="c d" style="left:683px;top:691px;width:71px;height:25px;background:#f0f7fb"><span class="n">2.02</span></div><div class="c d" style="left:755px;top:691px;width:71px;height:25px;background:#f0f7fb"><span class="n">3.54</span></div><div class="c d" style="left:827px;top:691px;width:71px;height:25px;background:#f0f7fb"><span class="n">3.27</span></div><div class="c d" style="left:899px;top:691px;width:37px;height:25px;background:#efefef;color:#f00">胜</div><div class="c d" style="left:937px;top:691px;width:36px;height:25px;background:#efefef;color:#f00">赢</div><div class="c d" style="left:974px;top:691px;width:55px;height:25px;background:#efefef;color:#f00">大</div><div class="c d sm" style="left:3px;top:717px;width:1040px;height:25px;background:#fff;padding-right:14px">近<span class="r"><span class="n">10</span></span>场<span class="n">,</span>胜<span class="n">4</span>平<span class="n">4</span>负<span class="n">2, </span>胜率<span class="n">:</span><span class="r"><span class="n">40%</span></span><span class="n"> </span>让胜率<span class="n">:</span><span class="r"><span class="n">50%</span></span><span class="n"> </span>大率<span class="n">:</span><span class="r"><span class="n">70%</span></span><span class="n"> </span>单率<span class="n">:</span><span class="r"><span class="n">40%</span></span></div>
</body></html>
